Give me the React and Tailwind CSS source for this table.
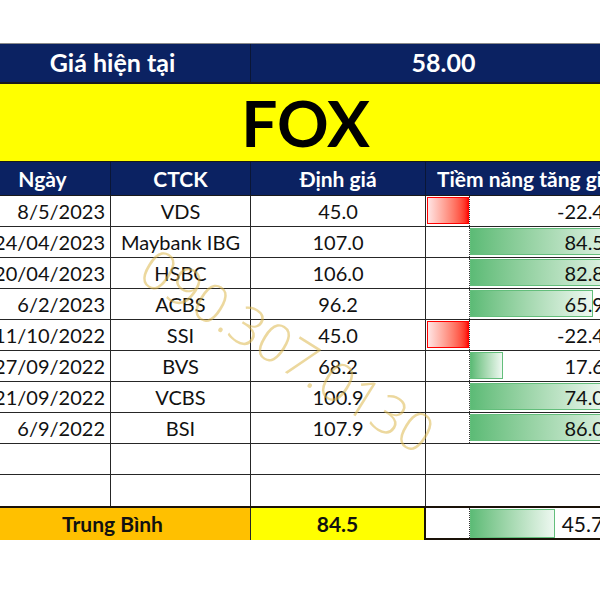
import React from 'react';

const PRICE = 58;
const SCALE = 1.87;

const rows = [
  { date: '8/5/2023', broker: 'VDS', value: 45.0 },
  { date: '24/04/2023', broker: 'Maybank IBG', value: 107.0 },
  { date: '20/04/2023', broker: 'HSBC', value: 106.0 },
  { date: '6/2/2023', broker: 'ACBS', value: 96.2 },
  { date: '11/10/2022', broker: 'SSI', value: 45.0 },
  { date: '27/09/2022', broker: 'BVS', value: 68.2 },
  { date: '21/09/2022', broker: 'VCBS', value: 100.9 },
  { date: '6/9/2022', broker: 'BSI', value: 107.9 },
];

const upside = (v) => (v / PRICE - 1) * 100;

const UpsideCell = ({ value, last }) => {
  const pct = upside(value);
  const width = Math.abs(pct) * SCALE;
  return (
    <div className={`relative flex items-center justify-end pr-[16px] ${last ? '' : 'border-b border-[#262626]'}`}>
      {/* dotted axis */}
      <div className="absolute left-[43px] top-0 bottom-0 border-l border-dotted border-[#333]" />
      {pct < 0 ? (
        <div
          className="absolute top-[1px] bottom-[2px] border border-[#ff0000] bg-gradient-to-r from-[#ffe4e4] to-[#ff0000]"
          style={{ left: 43 - width, width }}
        />
      ) : (
        <div
          className="absolute left-[44px] top-[1px] bottom-[2px] border border-[#63be7b] bg-gradient-to-r from-[#5cbb76] to-[#eef8f1]"
          style={{ width }}
        />
      )}
      <span className="relative">{pct.toFixed(1)}%</span>
    </div>
  );
};

export default function App() {
  const empty = [0, 1];
  const avg = 84.5;

  return (
    <div className="relative w-[600px] h-[600px] overflow-hidden bg-white font-[Lato,sans-serif] text-[#111]">
      <div className="pt-[43px] ml-[-25px] w-[661px]">
        {/* current price */}
        <div className="grid grid-cols-[276px_385px] h-[39px] bg-[#0b2262] border-t border-[#8a8a8a] text-white font-bold text-[25px]">
          <div className="flex items-center justify-center border-r border-[#0a1636]">Giá hiện tại</div>
          <div className="flex items-center justify-center">58.00</div>
        </div>

        {/* ticker */}
        <div className="h-[80px] bg-[#ffff00] border-t-2 border-b border-t-[#1a1a1a] border-b-[#1a1a1a] flex items-center justify-center">
          <span className="text-[64px] font-bold leading-none text-black">FOX</span>
        </div>

        {/* column headers */}
        <div className="grid grid-cols-[136px_140px_175px_210px] h-[34px] bg-[#0b2262] text-white font-bold text-[21px] border-b border-[#1a1a1a]">
          <div className="flex items-center justify-center border-r border-[#0a1636]">Ngày</div>
          <div className="flex items-center justify-center border-r border-[#0a1636]">CTCK</div>
          <div className="flex items-center justify-center border-r border-[#0a1636]">Định giá</div>
          <div className="flex items-center pl-[11px] whitespace-nowrap">Tiềm năng tăng giá</div>
        </div>

        {/* data */}
        <div className="grid grid-cols-[136px_140px_175px_210px] auto-rows-[31px] text-[20px]">
          {rows.map((r) => (
            <React.Fragment key={r.date + r.broker}>
              <div className="flex items-center justify-end pr-[5px] border-r border-b border-[#262626]">{r.date}</div>
              <div className="flex items-center justify-center border-r border-b border-[#262626]">{r.broker}</div>
              <div className="flex items-center justify-center border-r border-b border-[#262626]">{r.value.toFixed(1)}</div>
              <UpsideCell value={r.value} />
            </React.Fragment>
          ))}
          {empty.map((i) => (
            <React.Fragment key={i}>
              <div className={`border-r border-[#262626] ${i === 0 ? 'border-b' : ''}`} />
              <div className={`border-r border-[#262626] ${i === 0 ? 'border-b' : ''}`} />
              <div className={`border-r border-[#262626] ${i === 0 ? 'border-b' : ''}`} />
              <div className={`border-[#262626] ${i === 0 ? 'border-b' : ''}`} />
            </React.Fragment>
          ))}
        </div>

        {/* average */}
        <div className="grid grid-cols-[276px_175px_210px] h-[34px] text-[21px] border-t-2 border-b-2 border-[#1a1208]">
          <div className="flex items-center justify-center bg-[#ffc000] font-bold border-r border-[#262626]">Trung Bình</div>
          <div className="flex items-center justify-center bg-[#ffff00] font-bold border-r-2 border-[#1a1208]">{avg.toFixed(1)}</div>
          <UpsideCell value={avg} last />
        </div>
      </div>

      {/* watermark */}
      <div className="pointer-events-none absolute left-[288px] top-[350px] -translate-x-1/2 -translate-y-1/2 rotate-[32deg] whitespace-nowrap text-[54px] font-light font-['Open_Sans',sans-serif] text-[#dcb84e]/55">
        090.307.0130
      </div>
    </div>
  );
}
